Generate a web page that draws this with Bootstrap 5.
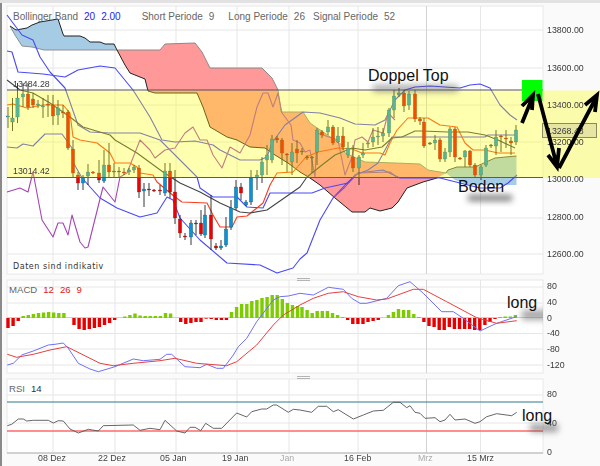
<!DOCTYPE html>
<html lang="de">
<head>
<meta charset="utf-8">
<title>Chart</title>
<link rel="stylesheet" href="https://cdn.jsdelivr.net/npm/bootstrap@5.3.0/dist/css/bootstrap.min.css">
<style>
html,body{width:600px;height:466px;overflow:hidden;background:#fafafa;margin:0;font-family:"Liberation Sans",Arial,sans-serif}
.top-strip{height:3px;background:#e2e2e2}
.side-bar{width:2px;height:463px;background:#8a8a8a;flex:none}
.chart-col{width:598px}
.pane-a{height:275px}.pane-b{height:98px}.pane-c{height:90px}
.pane-svg{display:block;width:598px;filter:blur(.35px)}
.pane-svg text{font-family:"Liberation Sans",Arial,sans-serif}
.ax{font-size:8.8px;fill:#3a3a3a}
.xl{font-size:8.8px;fill:#444}
.xl-m{font-size:8.8px;fill:#aaa}
.legend-bar{font-size:10px;line-height:1;color:#666;white-space:nowrap;left:11px;top:8.5px}
.legend-bar.lg-macd{font-size:9.6px;left:7px;top:7px}
.legend-bar.lg-rsi{font-size:9.6px;left:7px;top:8px}
.grp-gap{gap:6px}
.lg-g1{margin-left:21px}.lg-g2{margin-left:14px}.lg-g3{margin-left:8px}
.val-b{color:#2424f0}.val-r{color:#e02020}.val-d{color:#333}.val-g{color:#666}
.note{font-size:16px;line-height:16px;color:#111;white-space:nowrap}
.n-top{left:366px;top:64.5px}
.n-boden{left:456px;top:175.5px}
.n-long1{left:505px;top:16.5px}
.n-long2{left:520px;top:31.5px}
.daten{font-family:"DejaVu Sans",sans-serif;font-size:8px;letter-spacing:.55px;line-height:1;color:#333;left:11px;top:260px;white-space:nowrap}
</style>
</head>
<body>
<div class="top-strip"></div>
<div class="d-flex">
  <div class="side-bar"></div>
  <div class="chart-col">
    <div class="position-relative pane-a">
      <svg class="pane-svg" width="598" height="275" viewBox="2 3 598 275">
        <defs>
          <filter id="blr" x="-40%" y="-100%" width="180%" height="300%"><feGaussianBlur stdDeviation="3"/></filter>
        </defs>
        <rect x="7" y="6" width="536" height="268" fill="#fff" stroke="#e8e8e8"/>
        <g id="grid1" stroke="#e6e6e6" fill="none"></g>
        <polygon id="cBlue" fill="#a6cbe5"/>
        <polygon id="cRed" fill="#ff9999"/>
        <polygon id="cBlue2" fill="#a6cbe5"/>
        <g id="lines1" fill="none"></g>
        <g id="candles"></g>
        <rect x="7" y="90.5" width="593" height="87.5" fill="#ffff00" fill-opacity=".31"/>
        <line x1="7" y1="90" x2="543" y2="90" stroke="#555" stroke-width="1.1"/>
        <line x1="7" y1="177.5" x2="543" y2="177.5" stroke="#66660c" stroke-width="1.1"/>
        <text class="ax" x="13" y="87">13484.28</text>
        <text class="ax" x="13" y="174">13014.42</text>
        <g>
          <text class="ax" x="547" y="33">13800.00</text>
          <text class="ax" x="547" y="70.5">13600.00</text>
          <text class="ax" x="547" y="107.5">13400.00</text>
          <rect x="542.5" y="123.5" width="54" height="14" fill="#e6e6a2" stroke="#8a8a60"/>
          <text class="ax" x="547" y="133.5">13268.48</text>
          <text class="ax" x="547" y="145">13200.00</text>
          <text class="ax" x="547" y="182">13000.00</text>
          <text class="ax" x="547" y="220">12800.00</text>
          <text class="ax" x="547" y="257">12600.00</text>
        </g>
        <rect x="373" y="85" width="85" height="7" fill="#555" opacity=".5" filter="url(#blr)"/>
        <rect x="468" y="195" width="44" height="6" fill="#444" opacity=".7" filter="url(#blr)"/>
        <rect x="522" y="80" width="20.5" height="21" fill="#00ff00"/>
        <g fill="none" stroke="#000" stroke-width="3.8" stroke-linecap="butt">
          <path d="M522 123 533 96M522 106 533 95 532 110"/>
          <path d="M538 94 557 166M548 155 557 167 559 148"/>
          <path d="M559 168 597 96M585 105 597 95 595 112"/>
        </g>
      </svg>
      <div class="position-absolute d-flex legend-bar">
        <span class="d-flex grp-gap"><span>Bollinger Band</span><span class="val-b">20</span><span class="val-b">2.00</span></span>
        <span class="d-flex grp-gap lg-g1"><span>Short Periode</span><span class="val-g">9</span></span>
        <span class="d-flex grp-gap lg-g2"><span>Long Periode</span><span class="val-g">26</span></span>
        <span class="d-flex grp-gap lg-g3"><span>Signal Periode</span><span class="val-g">52</span></span>
      </div>
      <div class="position-absolute daten">Daten sind indikativ</div>
      <div class="position-absolute note n-top">Doppel Top</div>
      <div class="position-absolute note n-boden">Boden</div>
    </div>
    <div class="position-relative pane-b">
      <svg class="pane-svg" width="598" height="98" viewBox="2 278 598 98">
        <defs><clipPath id="clipL"><rect x="0" y="278" width="543" height="98"/></clipPath></defs>
        <rect x="7" y="280" width="536" height="93" fill="#fff" stroke="#e8e8e8"/>
        <g id="grid2" stroke="#e6e6e6" fill="none"></g>
        <line x1="7" y1="317.5" x2="543" y2="317.5" stroke="#c8cfe4"/>
        <g id="bars"></g>
        <g id="lines2" fill="none"></g>
        <rect x="297" y="278" width="13" height="1" fill="#b4b4b4"/><rect x="297" y="280" width="13" height="1" fill="#b4b4b4"/>
        <text class="ax" x="547" y="289">80</text>
        <text class="ax" x="547" y="305">40</text>
        <text class="ax" x="547" y="320.5">0</text>
        <text class="ax" x="547" y="336">-40</text>
        <text class="ax" x="547" y="351.5">-80</text>
        <text class="ax" x="547" y="367.5">-120</text>
        <g clip-path="url(#clipL)"><rect x="522" y="310" width="26" height="10" fill="#555" opacity=".5" filter="url(#blr)"/></g>
      </svg>
      <div class="position-absolute d-flex grp-gap legend-bar lg-macd"><span>MACD</span><span class="val-r">12</span><span class="val-r">26</span><span class="val-r">9</span></div>
      <div class="position-absolute note n-long1">long</div>
    </div>
    <div class="position-relative pane-c">
      <svg class="pane-svg" width="598" height="90" viewBox="2 376 598 90">
        <rect x="7" y="379" width="536" height="74" fill="#fff" stroke="#e8e8e8"/>
        <g id="grid3" stroke="#e6e6e6" fill="none"></g>
        <line x1="7" y1="453" x2="543" y2="453" stroke="#b0b0b0"/>
        <line x1="7" y1="402" x2="543" y2="402" stroke="#2c7a8c"/>
        <line x1="7" y1="431" x2="543" y2="431" stroke="#ff6a6a" stroke-width="1.4"/>
        <g id="lines3" fill="none"></g>
        <rect x="297" y="376" width="13" height="1" fill="#b4b4b4"/><rect x="297" y="378" width="13" height="1" fill="#b4b4b4"/>
        <text class="ax" x="547" y="397">80</text>
        <text class="ax" x="547" y="426">40</text>
        <text class="ax" x="547" y="455">0</text>
        <rect x="530" y="424" width="28" height="8" fill="#555" opacity=".55" filter="url(#blr)"/>
        <text class="xl" x="38" y="461">08 Dez</text>
        <text class="xl" x="98" y="461">22 Dez</text>
        <text class="xl" x="160" y="461">05 Jan</text>
        <text class="xl" x="222" y="461">19 Jan</text>
        <text class="xl-m" x="280" y="461">Jan</text>
        <text class="xl" x="344" y="461">16 Feb</text>
        <text class="xl-m" x="418" y="461">Mrz</text>
        <text class="xl" x="467" y="461">15 Mrz</text>
      </svg>
      <div class="position-absolute d-flex grp-gap legend-bar lg-rsi"><span>RSI</span><span class="val-d">14</span></div>
      <div class="position-absolute note n-long2">long</div>
    </div>
  </div>
</div>
<script src="https://cdn.jsdelivr.net/npm/bootstrap@5.3.0/dist/js/bootstrap.bundle.min.js"></script>
<script>
const $=id=>document.getElementById(id);
const VX=[53,115,176,237,289,358,426.5,480.5];
function grid(id,hs,y0,y1){let s='';hs.forEach(y=>s+=`<line x1="7" x2="543" y1="${y}" y2="${y}"/>`);
 VX.forEach(x=>s+=`<line x1="${x}" x2="${x}" y1="${y0}" y2="${y1}"${x==426.5?' stroke="#d2d2d2"':''}/>`);$(id).innerHTML=s;}
grid('grid1',[30,68,105,142,218,254],6,274);
grid('grid2',[287,303,333.5,349,365],280,373);
grid('grid3',[395,423],379,453);
const Z=(ox,oy,a)=>{let r=[];for(let i=0;i<a.length;i+=2)r.push((ox+a[i]/3).toFixed(1)+','+(oy+a[i+1]/3).toFixed(1));return r.join(' ');};
const P=a=>{let r=[];for(let i=0;i<a.length;i+=2)r.push(a[i]+','+a[i+1]);return r.join(' ');};
const L=(pts,c,w)=>`<polyline points="${pts}" stroke="${c}" stroke-width="${w||1.1}" stroke-linejoin="round"/>`;
/* clouds */
const blueTop=[10,26,16,30,27,28,32,25,40,22,46,21,58,19,63,34,64,36,80,36,85,38,90,42,100,42,105,44,114,44,117,50];
const blueBot=[117,50,44,50,32,47,22,46,15,35,10,26];
const redTop=[117,50,160,50,165,44,195,43,202,52,210,68,262,68,272,78,278,90,281,112,303,112,310,123,342,145,345,153,365,162,395,163,420,164,428,170,446,173];
const redBot=[437,178,423,182,407,188,398,202,392,208,380,211,370,208,365,212,352,212,335,198,320,185,310,178,300,172,288,163,275,155,265,148,250,147,237,140,227,137,210,127,203,107,197,93,155,93,148,91,145,79,130,73,125,65,117,50];
$('cBlue').setAttribute('points',P(blueTop.concat(blueBot)));
$('cRed').setAttribute('points',P(redTop.concat(redBot)));
const g2Top=[446,173,448,170,457,167,475,167,495,158,516.5,156];
$('cBlue2').setAttribute('points',P(g2Top.concat([516.5,185,470,185,455,180,446,173])));
let s1='';
s1+=L(P(blueBot),'#8f8f8f',1);
s1+=L(P(blueTop),'#222',1);
s1+=L(P(redTop),'#8a8a8a',1);
s1+=L(P(redBot),'#222',1);
s1+=L(P(g2Top),'#555',1);
/* Bollinger and other lines */
const B='#4a4af4';
s1+=L(P([7,15,22,35,33,40,40,57,50,72,65,88,78,125,90,132,110,133,140,133,160,140,170,150,182,162,197,177,200,188,213,197,237,197,247,207,263,208,270,193,300,193,312,193,325,188,348,183,355,175,368,170,378,163,385,150,392,137,485,137,488,135,516,135]),B);
s1+=L(P([7,51,12,52,18,72,43,74,65,77,78,70,100,66,115,68,133,90,150,117,162,140,175,142,195,141,213,145,220,150,240,160,260,160,267,157,272,143,285,125,303,112,320,113,340,118,355,124,375,125,385,120,395,100,405,90,415,87,430,86,445,87,460,88,470,85,480,84,490,88,500,105,510,115,517,120]),B);
s1+=L(P([7,147,17,148,23,144,33,146,45,134,62,134,72,148,73,162,82,178,100,198,117,208,140,217,157,213,167,197,173,200,180,218,200,240,227,263,260,265,277,273,293,268,300,259,307,253,320,220,333,198,345,185,358,173,383,170,400,178,440,178,460,183,480,188,500,188,508,183,517,175]),B);
/* chikou */
s1+=L(P([7,192,20,188,28,192,33,172,42,220,53,237,58,223,63,223,68,235,72,215,80,242,85,248,88,247,103,187,115,202,120,177,127,173,140,140,150,150,155,158,165,150,175,148,185,133,193,127,200,140,207,140,213,155,222,168,230,147,240,153,250,135,257,107,263,93,268,93,273,107,278,93,282,113,291,125,293,140,300,143,305,152,310,150,315,177,317,133,338,140,345,175,352,157,355,140,362,137,368,142,373,130,383,133,388,113,395,120]),'#a545b5');
s1+=L(P([333,198,345,187,358,173,390,172,398,178]),'#9548b8');
/* tenkan */
s1+=L(P([7,105,13,104,27,108,43,105,63,105,70,113,73,137,80,140,97,143,110,153,115,163,130,163,137,167,140,173,153,175,157,182,175,197,182,202,207,203,213,215,220,227,232,227,237,217,247,216,263,203,270,185,277,173,293,172,306,157,318,152,338,148,352,149,362,153,380,153,385,155,390,143,397,130,408,118,428,118,440,125,457,127,465,143,473,150,485,150,498,153,515,153]),'#f83c1c');
/* kijun */
s1+=L(P([7,80,20,90,33,93,50,103,70,117,83,127,110,135,115,140,137,153,163,172,180,183,200,192,220,203,240,212,250,213,267,210,300,187,307,177,322,165,335,155,352,148,365,150,382,147,392,138,402,137,415,131,422,131,448,132,468,132,485,135,498,140,515,148]),'#444');
$('lines1').innerHTML=s1;
/* candles: x,top,bottom,high,low,up */
const C=[[8,116,117,107,128,1],[12.5,118,122,98,131,1],[17.5,98,117,83,123,1],[23,94,97,83,107,1],[28,94,107,83,110,0],[33,99,105,93,108,0],[38,104,105,100,108,1],[43,106,107,98,118,1],[48,104,105,95,117,0],[53,105,116,95,125,0],[58,108,115,100,125,1],[63,112,113,105,118,0],[68,112,148,110,150,0],[73,149,173,140,178,0],[78,175,183,172,190,0],[83,177,183,175,190,1],[88,172,176,164,185,1],[93,172,173,171,174,0],[99,173,180,160,183,0],[104,165,181,150,183,1],[109,165,172,143,178,0],[114,171,172,163,177,0],[119,171,172,167,177,0],[124,172,173,168,175,0],[129,170,172,168,175,1],[134,167,170,165,173,1],[139,168,192,165,198,0],[144,189,191,183,207,1],[149,189,190,183,196,0],[154,190,191,189,192,0],[160,190,191,185,195,0],[165,171,193,163,196,1],[170,171,192,163,198,0],[175,192,218,170,224,0],[180,219,233,215,238,0],[185,236,237,233,240,0],[191,223,237,220,245,1],[196,223,224,220,235,0],[201,223,234,210,236,0],[205,215,235,205,238,1],[211,215,239,195,250,0],[216,246,248,243,250,0],[221,246,248,240,250,1],[226,229,245,217,247,1],[231,208,227,200,230,1],[236,187,208,180,210,1],[241,187,193,183,200,0],[246,202,205,200,206,1],[251,178,202,170,205,1],[257,175,178,170,190,1],[262,162,175,157,183,1],[267,155,160,145,175,1],[272,139,160,135,163,1],[277,138,140,136,143,0],[282,140,153,138,165,0],[287,154,155,153,172,0],[292,152,162,143,175,1],[297,149,153,140,163,0],[302,151,152,148,155,0],[307,157,158,155,160,0],[312,157,158,156,173,0],[317,130,152,128,165,1],[322,132,135,130,138,0],[328,127,132,120,135,1],[333,127,143,125,145,0],[338,136,142,127,143,1],[343,136,147,127,150,0],[348,148,155,142,158,1],[353,157,168,145,172,0],[359,157,168,155,185,1],[363,153,155,143,158,1],[368,143,144,142,148,1],[373,137,142,128,147,1],[378,136,137,127,145,1],[383,133,136,128,142,1],[389,110,133,108,137,1],[394,96,110,90,118,1],[399,93,95,88,97,1],[404,93,106,90,112,0],[409,94,105,91,110,1],[415,94,119,90,122,0],[420,119,121,117,125,0],[424,122,146,118,148,0],[430,143,144,142,145,0],[435,140,143,135,150,1],[440,140,159,138,162,0],[445,152,159,148,162,1],[450,129,152,127,157,1],[455,129,157,127,162,0],[460,158,159,157,160,0],[465,151,157,150,167,1],[470,151,165,150,167,0],[475,165,175,163,177,0],[481,167,175,165,180,1],[486,148,165,145,167,1],[491,145,146,144,148,0],[496,137,146,130,155,1],[501,136,137,135,152,0],[506,138,139,130,148,0],[511,141,143,137,155,0],[516,130,142,125,145,1]];
let cs='';
C.forEach(c=>{const[x,t,b,h,l,u]=c;cs+=`<line x1="${x}" x2="${x}" y1="${h}" y2="${l}" stroke="#222" stroke-width=".9"/>`;
 cs+=`<rect x="${x-1.7}" y="${t}" width="3.4" height="${Math.max(b-t,1)}" fill="${u?'#0a94d8':'#f00000'}" stroke="#333" stroke-width=".25"/>`;});
$('candles').innerHTML=cs;
/* MACD bars */
const bL=[-10,-8,-3,2,3,4,5,5.5,6,5.5,5,5,0,-7,-11,-12,-11,-10,-9,-7,-5,-2,0,1.5,3,4.5,2.5,2,2,2,2,5,4.5,0,-4,-6,-5,-4,-4,-.7,-1,-2,-2,-2,6,11,14,14,17,18,20,21,23,23,19,15,13,12];
const bR=[11,8,5,7,7,7,5,3,1,-2,-6,-6,-6,-4,-3,-2,0,3,6,9,8,8,4,1,-4,-8,-9,-12,-12,-9,-11,-11,-11,-11,-12,-12,-7,-4,-1,1,1.5,1.5,3];
let bs='';
const bar=(x,v)=>{if(!v)return;const y=v>0?318-v:318;bs+=`<rect x="${(x-1.7).toFixed(1)}" y="${y}" width="3.4" height="${Math.abs(v)}" fill="${v>0?'#7ccc00':'#e80000'}"/>`;};
bL.forEach((v,i)=>bar(8+i*5.08,v));
bR.forEach((v,i)=>bar(302+i*5.08,v));
$('bars').innerHTML=bs;
$('lines2').innerHTML=
 L(Z(0,275,[22,270,40,265,65,240,100,228,145,210,165,208,190,204,205,220,235,265,270,282,295,290,345,275,400,252,430,257,480,253,500,238,515,238,555,275,600,278,620,268,650,280,670,280,700,240,715,215,740,190,770,140,820,75,840,65,865,63,900,55,940,60,985,37,1030,43,1055,70,1080,85,1100,85,1160,70,1195,32,1230,20,1270,55,1325,110,1360,110,1390,130,1440,168,1490,145,1540,128,1550,125]),'#7070f5',1)+
 L(Z(0,275,[22,238,50,247,100,238,150,225,200,215,240,235,300,265,340,272,400,265,480,257,525,250,590,265,680,272,710,260,770,210,820,150,850,120,900,90,940,70,985,55,1030,50,1075,65,1130,75,1160,72,1240,43,1270,43,1340,80,1430,128,1490,145,1550,137]),'#e84040',1);
$('lines3').innerHTML=
 L(Z(0,275,[22,452,35,448,55,432,70,432,80,438,100,436,145,436,160,444,175,437,190,438,210,462,235,474,265,463,295,468,310,452,400,450,420,466,450,460,480,464,495,436,530,468,555,474,570,457,585,457,602,467,617,445,640,460,665,460,710,414,740,426,755,410,785,402,800,402,820,390,830,390,865,412,880,403,900,405,935,412,955,394,980,394,1000,410,1015,404,1060,432,1090,420,1120,408,1150,406,1180,382,1200,382,1220,398,1230,392,1245,412,1260,415,1275,430,1305,428,1320,440,1335,435,1350,418,1365,435,1395,432,1425,445,1440,440,1460,425,1490,416,1535,422,1550,412]),'#555',.9);
</script>
</body>
</html>
